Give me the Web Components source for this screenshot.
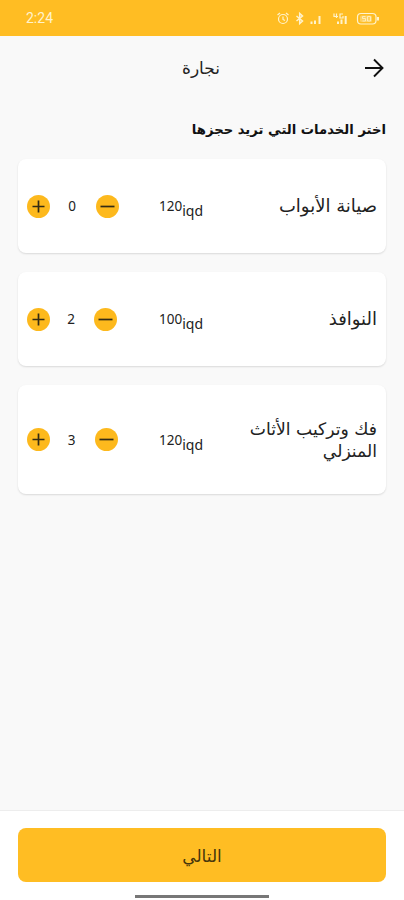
<!DOCTYPE html>
<html lang="ar" dir="rtl">
<head>
<meta charset="utf-8">
<meta name="viewport" content="width=device-width, initial-scale=1">
<title>نجارة</title>
<style>
  body {
    margin: 0;
    background: #f9f9f9;
    color: #222;
    font-family: "Noto Sans", "DejaVu Sans", sans-serif;
  }
</style>
</head>
<body>
<booking-page>
  <status-bar slot="status" time="2:24"></status-bar>
  <page-header slot="header">نجارة</page-header>
  <span slot="heading">اختر الخدمات التي تريد حجزها</span>
  <service-card price="120" count="0" style="--height: 94px; --count: 28px; --price: 43px; --name: 18px">صيانة الأبواب</service-card>
  <service-card price="100" count="2" style="--height: 94px; --count: 26px; --price: 44.5px; --name: 18px">النوافذ</service-card>
  <service-card price="120" count="3" style="--height: 109px; --count: 27px; --price: 44px; --name: 17.2px">فك وتركيب الأثاث<br>المنزلي</service-card>
  <bottom-bar slot="footer">التالي</bottom-bar>
</booking-page>

<script>
class BookingPage extends HTMLElement {
  constructor() {
    super();
    this.attachShadow({ mode: 'open' }).innerHTML = `
    <style>
      :host {
        display: flex;
        flex-direction: column;
        height: 900px;
        overflow: hidden;
      }
      main {
        flex: 1;
        padding: 19px 18px 0;
      }
      h2 {
        height: 23px;
        margin: 0 0 18px;
        color: #111;
        font: 700 13.2px/23px "DejaVu Sans", sans-serif;
        white-space: nowrap;
      }
      .list {
        display: flex;
        flex-direction: column;
        gap: 19px;
      }
    </style>
    <slot name="status"></slot>
    <slot name="header"></slot>
    <main>
      <h2><slot name="heading"></slot></h2>
      <div class="list"><slot></slot></div>
    </main>
    <slot name="footer"></slot>`;
  }
}

class StatusBar extends HTMLElement {
  connectedCallback() {
    this.attachShadow({ mode: 'open' }).innerHTML = `
    <style>
      :host {
        display: flex;
        direction: ltr;
        align-items: center;
        justify-content: space-between;
        height: 36px;
        padding: 0 24px 0 26px;
        box-sizing: border-box;
        background: #ffbd23;
        color: #fff3cd;
        font: 400 14px/36px Roboto, sans-serif;
      }
      svg {
        display: block;
      }
    </style>
    <span>${this.getAttribute('time')}</span>
    <svg width="104" height="16" viewBox="0 0 104 16" fill="none" stroke="currentColor" stroke-width="1.2">
      <circle cx="7" cy="9" r="4.5"/>
      <path d="M7 6.5v3l2 1M1.5 5L4 3M12.5 5L10 3"/>
      <path d="M20.5 6L26.500 11L23.700 13.500V3.500L26.500 6L20.500 11" stroke-width="1.5"/>
      <path d="M35.500 11.500v2.500M39 10.500v3.500M43.500 6v8" stroke-width="2"/>
      <path d="M62 11.500v2.500M65.500 9.500v4.500M69.700 6v8" stroke-width="2"/>
      <path d="M60.500 3.500v4.500M58 3.500v3h4M67 4h-3v4h3v-2"/>
      <rect x="81.500" y="3.500" width="18.500" height="10.500" rx="3.500"/>
      <path d="M102 7v3.500" stroke-width="2"/>
      <rect x="84" y="5.500" width="12" height="6.500" rx="1.500" fill="currentColor" fill-opacity=".35" stroke="none"/>
      <path d="M89.500 6.500h-3v2h3v2.500h-3M91.500 6.500h3v4.500h-3z" stroke-width=".8"/>
    </svg>`;
  }
}

class PageHeader extends HTMLElement {
  constructor() {
    super();
    this.attachShadow({ mode: 'open' }).innerHTML = `
    <style>
      :host {
        display: grid;
        grid-template-columns: 40px 1fr 38px;
        align-items: center;
        height: 63px;
      }
      svg {
        display: block;
        margin-right: 19px;
      }
      h1 {
        margin: 0;
        padding-top: 1px;
        font: 400 17px/24px "DejaVu Sans", sans-serif;
        text-align: center;
      }
    </style>
    <svg width="22" height="22" viewBox="0 0 22 22" fill="none" stroke="#111" stroke-width="1.9">
      <path d="M2 11h17M11 2.500l8.500 8.500-8.500 8.500"/>
    </svg>
    <h1><slot></slot></h1>`;
  }
}

class CountStepper extends HTMLElement {
  connectedCallback() {
    this.attachShadow({ mode: 'open' }).innerHTML = `
    <style>
      :host {
        display: flex;
        direction: ltr;
        align-items: center;
      }
      button {
        width: 23px;
        height: 23px;
        padding: 0;
        border: 0;
        border-radius: 50%;
        background: #fdb91d;
      }
      svg {
        display: block;
      }
      span {
        width: var(--count);
        padding: 0 10px 0 8px;
        font-size: 13.5px;
        text-align: center;
      }
    </style>
    <button type="button" aria-label="+">
      <svg width="23" height="23" fill="none" stroke="#332b14" stroke-width="1.7"><path d="M5.500 11.500h12M11.500 5.500v12"/></svg>
    </button>
    <span>${this.getAttribute('value')}</span>
    <button type="button" aria-label="-">
      <svg width="23" height="23" fill="none" stroke="#332b14" stroke-width="1.7"><path d="M4.500 11.500h14"/></svg>
    </button>`;
  }
}

class ServiceCard extends HTMLElement {
  connectedCallback() {
    this.attachShadow({ mode: 'open' }).innerHTML = `
    <style>
      :host {
        display: grid;
        grid-template-columns: 1fr auto 132px;
        align-items: center;
        height: var(--height);
        padding: 0 9px;
        box-sizing: border-box;
        border-radius: 8px;
        background: #fff;
        box-shadow: 0 1px 2px rgba(0, 0, 0, .13);
      }
      .name {
        font: 400 var(--name)/22px "DejaVu Sans", sans-serif;
        white-space: nowrap;
      }
      .price {
        display: flex;
        direction: ltr;
        width: var(--price);
        padding-top: 5px;
        font-size: 13.5px;
        line-height: 20px;
      }
      .unit {
        padding-top: 5px;
        font-size: 14px;
      }
      count-stepper {
        justify-self: end;
      }
    </style>
    <div class="name"><slot></slot></div>
    <div class="price"><span>${this.getAttribute('price')}</span><span class="unit">iqd</span></div>
    <count-stepper value="${this.getAttribute('count')}"></count-stepper>`;
  }
}

class BottomBar extends HTMLElement {
  constructor() {
    super();
    this.attachShadow({ mode: 'open' }).innerHTML = `
    <style>
      :host {
        display: flex;
        flex-direction: column;
        align-items: center;
        height: 90px;
        padding: 17px 18px 0;
        box-sizing: border-box;
        border-top: 1px solid #ededed;
        background: #fff;
      }
      button {
        width: 100%;
        height: 54px;
        padding: 2px 0 0;
        border: 0;
        border-radius: 8px;
        background: #ffbd23;
        color: #46350c;
        font: 400 17px/52px "DejaVu Sans", sans-serif;
      }
      .home {
        width: 134px;
        height: 3px;
        margin-top: 13px;
        background: #777;
      }
    </style>
    <button type="button"><slot></slot></button>
    <div class="home"></div>`;
  }
}

customElements.define('booking-page', BookingPage);
customElements.define('status-bar', StatusBar);
customElements.define('page-header', PageHeader);
customElements.define('count-stepper', CountStepper);
customElements.define('service-card', ServiceCard);
customElements.define('bottom-bar', BottomBar);
</script>
</body>
</html>
